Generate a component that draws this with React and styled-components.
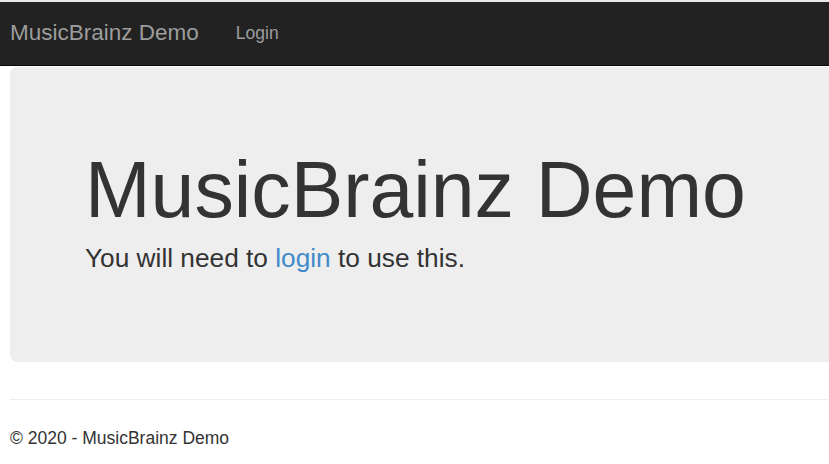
import React from 'react'
import styled, { createGlobalStyle } from 'styled-components'

const GlobalStyle = createGlobalStyle`
  html, body {
    margin: 0;
    padding: 0;
  }
  body {
    background: #fff;
    font-family: "Liberation Sans", Arial, Helvetica, sans-serif;
    color: #333;
    border-top: 2px solid #e9e9e9;
    overflow: hidden;
  }
`

const Navbar = styled.nav`
  display: flex;
  align-items: center;
  height: 63px;
  background-color: #222;
  border-bottom: 1px solid #080808;
  padding-left: 10px;
`

const Brand = styled.a`
  font-size: 22.5px;
  color: #9d9d9d;
  text-decoration: none;
  line-height: 1;
  margin-right: 37px;
`

const NavLink = styled.a`
  font-size: 17.5px;
  color: #9d9d9d;
  text-decoration: none;
  line-height: 1;
  margin-top: 1px;
`

const Page = styled.main`
  padding: 1px 0 0 10px;
  overflow: hidden;
`

const Jumbotron = styled.section`
  width: 900px;
  box-sizing: border-box;
  background-color: #eee;
  border-radius: 7px;
  padding: 80px 75px 85px;
`

const Heading = styled.h1`
  margin: 0 0 6px;
  font-size: 78.75px;
  font-weight: 500;
  line-height: 1.1;
  color: #333;
`

const Lead = styled.p`
  margin: 0;
  font-size: 26.25px;
  line-height: 1.42857;
  font-weight: 200;
  color: #333;

  a {
    color: #428bca;
    text-decoration: none;
  }
`

const Rule = styled.hr`
  width: 900px;
  margin: 37px 0 0;
  border: 0;
  border-top: 1px solid #eee;
`

const Footer = styled.footer`
  padding-top: 26px;
  font-size: 17.5px;
  line-height: 1.42857;
  color: #333;
`

export default function App() {
  return (
    <>
      <GlobalStyle />
      <Navbar>
        <Brand href="#">MusicBrainz Demo</Brand>
        <NavLink href="#">Login</NavLink>
      </Navbar>
      <Page>
        <Jumbotron>
          <Heading>MusicBrainz Demo</Heading>
          <Lead>
            You will need to <a href="#">login</a> to use this.
          </Lead>
        </Jumbotron>
        <Rule />
        <Footer>© 2020 - MusicBrainz Demo</Footer>
      </Page>
    </>
  )
}
